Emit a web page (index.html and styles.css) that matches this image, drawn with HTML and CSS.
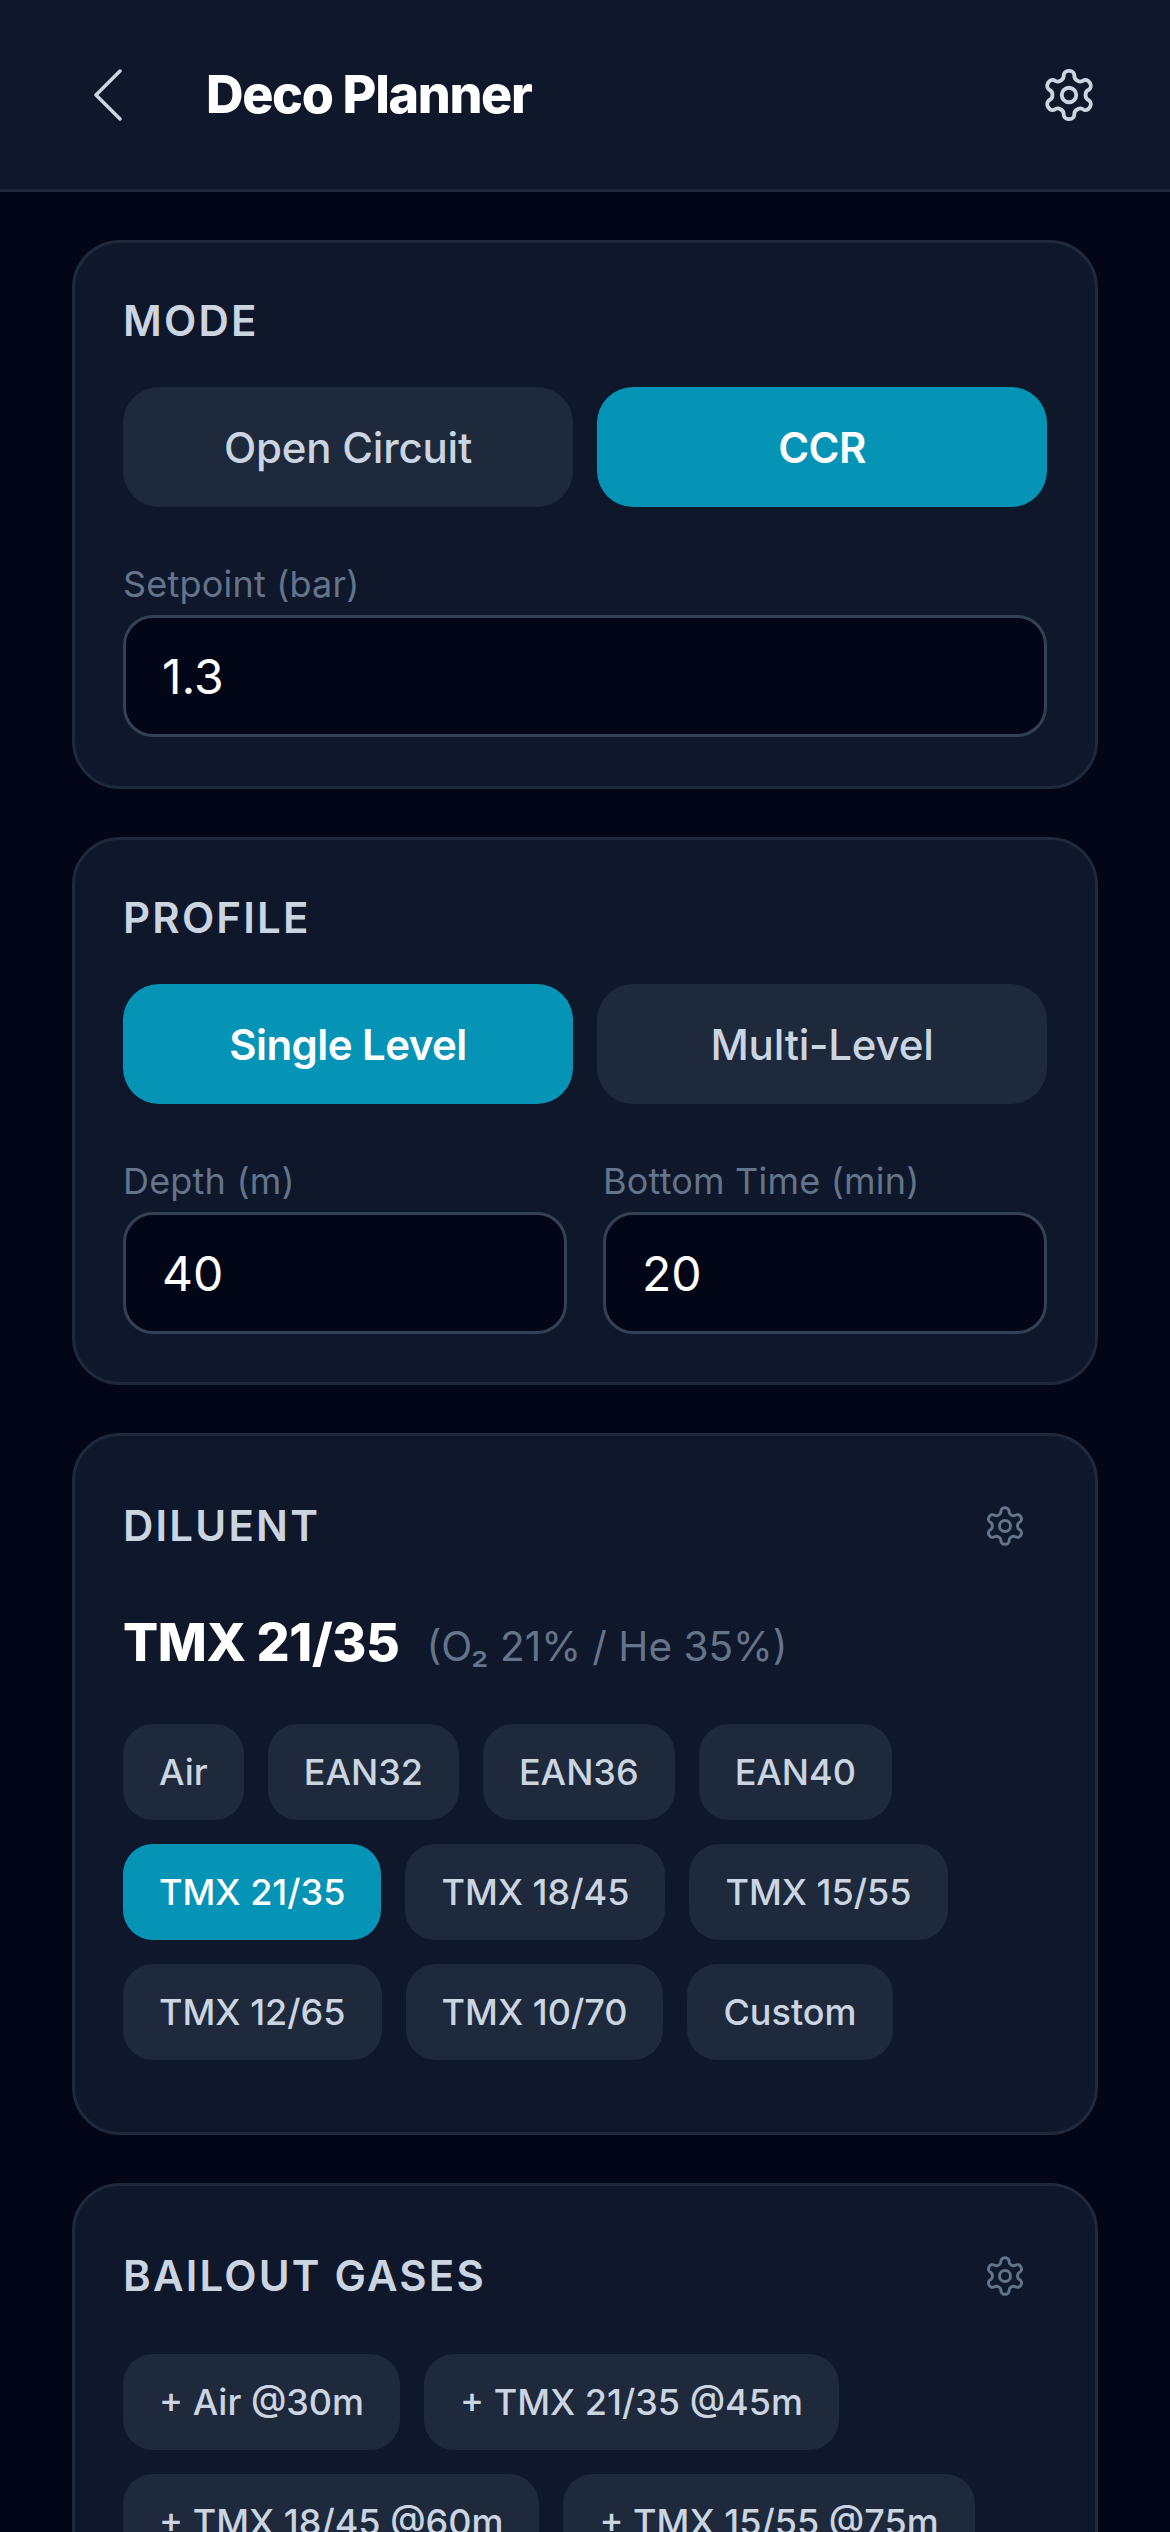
FILE: index.html
```html
<!DOCTYPE html>
<html lang="en">
<head>
<meta charset="utf-8">
<title>Deco Planner</title>
<link rel="stylesheet" href="styles.css">
</head>
<body>
<svg class="defs" width="0" height="0" aria-hidden="true">
  <symbol id="gear" viewBox="0 0 24 24">
    <path d="M12.22 2h-.44a2 2 0 0 0-2 2v.18a2 2 0 0 1-1 1.73l-.43.25a2 2 0 0 1-2 0l-.15-.08a2 2 0 0 0-2.73.73l-.22.38a2 2 0 0 0 .73 2.73l.15.1a2 2 0 0 1 1 1.72v.51a2 2 0 0 1-1 1.74l-.15.09a2 2 0 0 0-.73 2.73l.22.38a2 2 0 0 0 2.73.73l.15-.08a2 2 0 0 1 2 0l.43.25a2 2 0 0 1 1 1.73V20a2 2 0 0 0 2 2h.44a2 2 0 0 0 2-2v-.18a2 2 0 0 1 1-1.73l.43-.25a2 2 0 0 1 2 0l.15.08a2 2 0 0 0 2.73-.73l.22-.39a2 2 0 0 0-.73-2.73l-.15-.08a2 2 0 0 1-1-1.74v-.5a2 2 0 0 1 1-1.74l.15-.09a2 2 0 0 0 .73-2.73l-.22-.38a2 2 0 0 0-2.73-.73l-.15.08a2 2 0 0 1-2 0l-.43-.25a2 2 0 0 1-1-1.73V4a2 2 0 0 0-2-2z"/>
    <circle cx="12" cy="12" r="3"/>
  </symbol>
</svg>
<div class="screen">
  <header class="topbar">
    <div class="topbar-left">
      <svg class="back" viewBox="0 0 28 52"><polyline points="26,2 2,26 26,50"/></svg>
      <h1 class="title">Deco Planner</h1>
    </div>
    <svg class="gear gear-lg"><use href="#gear"/></svg>
  </header>
  <main class="content">
    <section class="card">
      <h2 class="label label-block">MODE</h2>
      <div class="segment">
        <div class="seg-btn">Open Circuit</div>
        <div class="seg-btn is-active">CCR</div>
      </div>
      <div class="field field-top">
        <div class="field-label">Setpoint (bar)</div>
        <div class="input">1.3</div>
      </div>
    </section>
    <section class="card">
      <h2 class="label label-block">PROFILE</h2>
      <div class="segment">
        <div class="seg-btn is-active">Single Level</div>
        <div class="seg-btn">Multi-Level</div>
      </div>
      <div class="field-row">
        <div class="field">
          <div class="field-label">Depth (m)</div>
          <div class="input">40</div>
        </div>
        <div class="field">
          <div class="field-label">Bottom Time (min)</div>
          <div class="input">20</div>
        </div>
      </div>
    </section>
    <section class="card">
      <div class="card-head">
        <h2 class="label">DILUENT</h2>
        <div class="icon-btn"><svg class="gear gear-sm"><use href="#gear"/></svg></div>
      </div>
      <div class="gas-title">
        <span class="gas-name">TMX 21/35</span>
        <span class="gas-detail">(O₂ 21% / He 35%)</span>
      </div>
      <div class="chips chips-end">
        <div class="chip">Air</div>
        <div class="chip">EAN32</div>
        <div class="chip">EAN36</div>
        <div class="chip">EAN40</div>
        <div class="chip is-active">TMX 21/35</div>
        <div class="chip">TMX 18/45</div>
        <div class="chip">TMX 15/55</div>
        <div class="chip">TMX 12/65</div>
        <div class="chip">TMX 10/70</div>
        <div class="chip">Custom</div>
      </div>
    </section>
    <section class="card">
      <div class="card-head head-gap">
        <h2 class="label">BAILOUT GASES</h2>
        <div class="icon-btn"><svg class="gear gear-sm"><use href="#gear"/></svg></div>
      </div>
      <div class="chips">
        <div class="chip">+ Air @30m</div>
        <div class="chip">+ TMX 21/35 @45m</div>
        <div class="chip">+ TMX 18/45 @60m</div>
        <div class="chip">+ TMX 15/55 @75m</div>
      </div>
    </section>
  </main>
</div>
</body>
</html>
```
FILE: styles.css
```css
* { box-sizing: border-box; }
html, body { margin: 0; padding: 0; background: #020617; }
body { font-family: Inter, "Liberation Sans", sans-serif; color: #cbd5e1; }
.defs { position: absolute; }
.screen { width: 1170px; height: 2532px; overflow: hidden; }

.topbar {
  height: 192px;
  background: #0f172a;
  border-bottom: 3px solid #1e293b;
  display: flex;
  align-items: center;
  justify-content: space-between;
  padding: 0 72px 0 94px;
}
.topbar-left { display: flex; align-items: center; gap: 84px; }
.back { width: 28px; height: 52px; fill: none; stroke: #cbd5e1; stroke-width: 3.5; stroke-linecap: round; stroke-linejoin: round; }
.title { margin: 0; font-size: 52px; line-height: 72px; font-weight: 800; color: #fff; letter-spacing: -1.35px; }
.gear { fill: none; stroke: currentColor; stroke-width: 1.6; stroke-linecap: round; stroke-linejoin: round; display: block; }
.gear-lg { width: 58px; height: 58px; color: #cbd5e1; }
.gear-sm { width: 44px; height: 44px; color: #64748b; }

.content { display: flex; flex-direction: column; gap: 48px; padding: 48px 72px 0; }
.card { background: #0f172a; border: 3px solid #1e293b; border-radius: 48px; padding: 48px; }

.label { margin: 0; font-size: 42px; line-height: 60px; font-weight: 600; letter-spacing: 2.2px; color: #cbd5e1; }
.label-block { margin-bottom: 36px; }

.segment { display: grid; grid-template-columns: 1fr 1fr; gap: 24px; }
.seg-btn { height: 120px; border-radius: 36px; background: #1e293b; color: #cbd5e1; font-size: 42px; font-weight: 500; letter-spacing: -0.2px; display: flex; align-items: center; justify-content: center; }
.seg-btn.is-active { font-weight: 600; letter-spacing: -0.55px; }
.seg-btn.is-active, .chip.is-active { background: #0593b6; color: #fff; }

.field-top { margin-top: 48px; margin-bottom: 1px; }
.field-row { display: grid; grid-template-columns: 1fr 1fr; gap: 36px; margin-top: 48px; }
.field-label { font-size: 36px; line-height: 48px; color: #64748b; padding-top: 5px; margin-bottom: 7px; letter-spacing: 0.2px; }
.input { height: 122px; background: #020617; border: 3px solid #334155; border-radius: 30px; padding: 0 36px; display: flex; align-items: center; font-size: 48px; color: #fff; }

.card-head { display: flex; align-items: center; justify-content: space-between; }
.head-gap { margin-bottom: 36px; }
.icon-btn { width: 84px; height: 84px; padding: 20px; }

.gas-title { display: flex; align-items: baseline; gap: 27px; height: 78px; margin: 36px 0 42px; line-height: 78px; }
.gas-name { font-size: 52px; font-weight: 800; color: #fff; letter-spacing: -0.4px; }
.gas-detail { font-size: 40.5px; color: #64748b; }

.chips { display: flex; flex-wrap: wrap; gap: 24px; }
.chips-end { margin-bottom: 24px; }
.chip { height: 96px; padding: 0 36px; border-radius: 30px; background: #1e293b; color: #cbd5e1; font-size: 36px; font-weight: 500; display: flex; align-items: center; }
```
